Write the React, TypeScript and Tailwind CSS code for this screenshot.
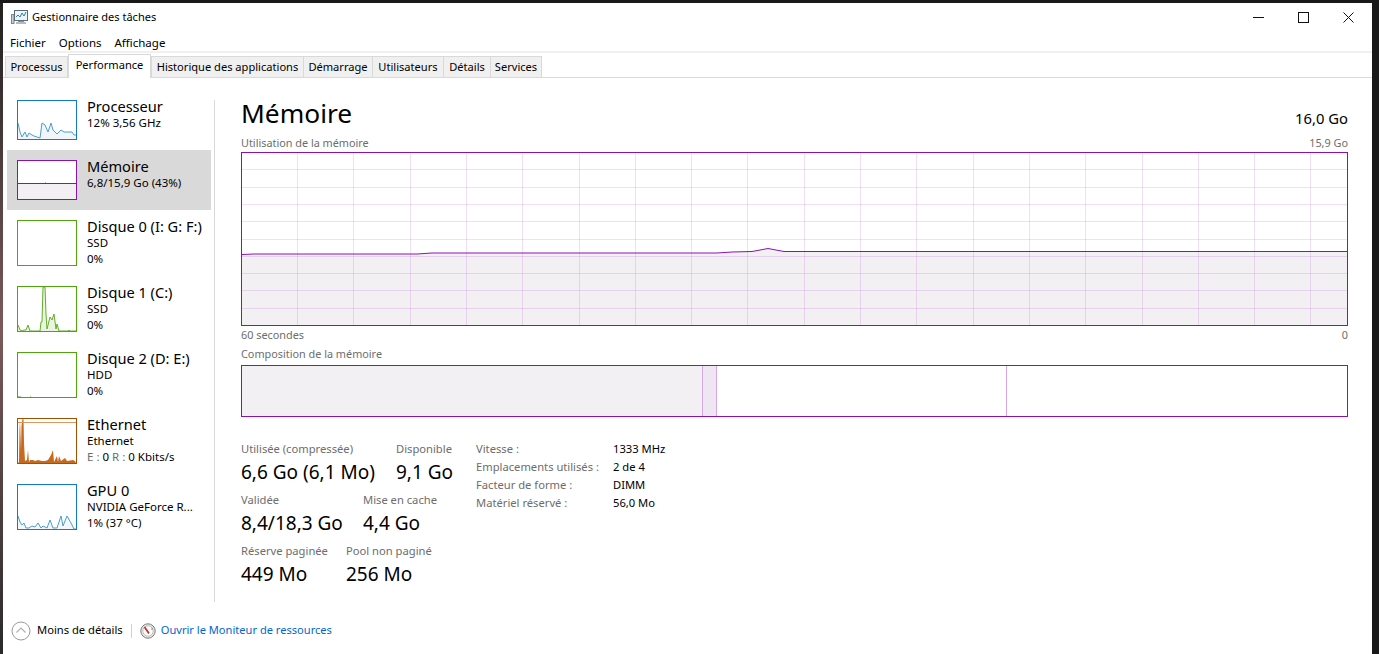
const FONT = "font-['Noto_Sans','Open_Sans',sans-serif]";

const tabs = ['Processus', 'Performance', 'Historique des applications', 'Démarrage', 'Utilisateurs', 'Détails', 'Services'];
const tabWidths = ['w-[63px]', 'w-[83px]', 'w-[153px]', 'w-[70px]', 'w-[72px]', 'w-[48px]', 'w-[52px]'];

const PURPLE = '#8b12ae';

// Sparklines, in 58 wide thumbnail coordinates
const cpuLine = '0,22 2,31 4,36 7,31 9,36 11,32 14,34 16,35 19,36 22,37 24,22 27,24 30,31 33,22 35,29 39,33 41,31 43,29 46,31 49,31 54,31 56,34 58,34';
const diskLine = '0,38 2,43 4,44 6,43 8,43 10,38 12,44 22,44 23,35 24,35 25,0 27,0 28,27 29,42 32,30 34,33 36,27 38,42 39,37 41,44 50,44 51,43 51.5,44 58,44';
const etherLine = '1,43 1.5,11 2,0 3,31 3.5,7 4.5,0 5.5,0 6,24 7,42 9,41 10,31 11,43 12,41 15,41 17,42 20,41 24,42 27,42 30,41 33,36 35,31 36,43 37,41 39,37 40,43 41,37 43,42 47,39 49,42 55,41 57,42';
const gpuLine = '0,31 2,37 4,40 6,38 8,43 11,43 14,41 17,42 20,38 23,43 25,41 29,43 32,35 35,43 39,43 40,40 43,31 45,41 49,31 53,38 56,44 58,44';

function Sparkline({ points, color, fill, height = 44 }: { points: string; color: string; fill: string; height?: number }) {
  return (
    <svg className="h-full w-full" viewBox={`0 0 58 ${height}`} preserveAspectRatio="none">
      <polygon points={`0,${height} ${points} 58,${height}`} fill={fill} />
      <polyline points={points} fill="none" stroke={color} strokeWidth="1" />
    </svg>
  );
}

function SideItem({ title, lines, children, color, selected, short }: {
  title: string;
  lines: React.ReactNode[];
  children?: React.ReactNode;
  color: string;
  selected?: boolean;
  short?: boolean;
}) {
  return (
    <div className={`flex w-[204px] pl-[10px] pt-[10px] ${short ? 'h-[60px]' : 'h-[66px]'} ${selected ? 'bg-[#d9d9d9]' : ''}`}>
      <div className={`w-[60px] shrink-0 border bg-white overflow-hidden ${short ? 'h-[40px]' : 'h-[46px]'}`} style={{ borderColor: color }}>
        {children}
      </div>
      <div className="ml-[10px] min-w-0">
        <div className="text-[14.6px] leading-[18px] text-black -mt-[3px] whitespace-nowrap">{title}</div>
        {lines.map((line, i) => (
          <div key={i} className="text-[11.5px] leading-[16px] text-black whitespace-nowrap">{line}</div>
        ))}
      </div>
    </div>
  );
}

function Stat({ label, value, width }: { label: string; value: string; width: string }) {
  return (
    <div className={width}>
      <div className="text-[11.2px] leading-[16px] text-[#6d6d6d] whitespace-nowrap">{label}</div>
      <div className="text-[19px] leading-[26px] mt-[2px] text-black whitespace-nowrap">{value}</div>
    </div>
  );
}

function MemoryChart() {
  const xs = Array.from({ length: 19 }, (_, i) => 56 + i * 56.3);
  const ys = Array.from({ length: 9 }, (_, i) => 17.3 * (i + 1));
  const line = '0,101.5 12,101 175,101 190,100 475,100 490,99 510,98.5 526,95.5 542,98.5 1107,98.5';
  return (
    <svg className="mt-[2px] block h-[174px] w-[1107px] border border-[#8b12ae] box-border" viewBox="0 0 1105 172" preserveAspectRatio="none">
      <polygon points={`${line} 1107,172 0,172`} fill="#f3f0f4" />
      {xs.map((x) => (
        <line key={x} x1={Math.round(x) - 0.5} x2={Math.round(x) - 0.5} y1="0" y2="172" stroke="#a83fc8" strokeOpacity="0.17" />
      ))}
      {ys.map((y) => (
        <line key={y} x1="0" x2="1105" y1={Math.round(y) - 0.5} y2={Math.round(y) - 0.5} stroke="#a83fc8" strokeOpacity="0.17" />
      ))}
      <polyline points={line} fill="none" stroke={PURPLE} strokeWidth="1" />
    </svg>
  );
}

function AppIcon() {
  return (
    <svg width="17" height="16" viewBox="0 0 17 16">
      <rect x="0.5" y="5.5" width="2.5" height="9" fill="#c8ced2" stroke="#7d868c" />
      <rect x="3.5" y="1.5" width="13" height="10" fill="#eef5fa" stroke="#5f6b73" />
      <polyline points="5,8 7,6 9,8 11,4 13,7 15,3" fill="none" stroke="#2b7fb8" strokeWidth="1" />
      <rect x="7" y="12" width="6" height="1" fill="#8b949a" />
      <rect x="5" y="13" width="10" height="2" fill="#b5bcc1" />
    </svg>
  );
}

function FooterChevron() {
  return (
    <svg width="20" height="20" viewBox="0 0 20 20">
      <circle cx="10" cy="10" r="9" fill="white" stroke="#9a9a9a" />
      <polyline points="5.5,11.5 10,7 14.5,11.5" fill="none" stroke="#b0b0b0" strokeWidth="1.2" />
    </svg>
  );
}

function MonitorIcon() {
  return (
    <svg width="16" height="16" viewBox="0 0 16 16">
      <circle cx="8" cy="8" r="7.2" fill="#e9e9e9" stroke="#7b7b7b" />
      <circle cx="8" cy="8" r="5.2" fill="white" stroke="#9a9a9a" strokeWidth="0.6" />
      <line x1="4.5" y1="4" x2="9" y2="10.5" stroke="#c9302c" strokeWidth="1.8" />
      <line x1="12" y1="4.5" x2="12" y2="7" stroke="#888" strokeWidth="1" />
    </svg>
  );
}

export default function App() {
  return (
    <div className={`${FONT} flex h-[654px] w-[1379px] flex-col overflow-hidden bg-[#191919]`}>
      <div className="h-[3px] shrink-0" />
      <div className="flex min-h-0 flex-1">
        <div className="w-[3px] shrink-0 bg-gradient-to-b from-[#222222] via-[#7d5a5a] to-[#2a2a2a]" />
        <div className="flex w-[1369px] flex-col bg-white">
          {/* Title bar */}
          <div className="flex h-[28px] shrink-0 items-center pl-[8px]">
            <AppIcon />
            <span className="ml-[4px] text-[11.05px] text-black">Gestionnaire des tâches</span>
            <div className="ml-auto flex items-center">
              <svg className="mr-[34px]" width="11" height="11" viewBox="0 0 11 11"><line x1="0" x2="11" y1="5.5" y2="5.5" stroke="#111" /></svg>
              <svg className="mr-[34px]" width="11" height="11" viewBox="0 0 11 11"><rect x="0.5" y="0.5" width="10" height="10" fill="none" stroke="#111" /></svg>
              <svg className="mr-[18px]" width="11" height="11" viewBox="0 0 11 11"><path d="M0.5 0.5 L10.5 10.5 M10.5 0.5 L0.5 10.5" stroke="#111" /></svg>
            </div>
          </div>
          {/* Menu */}
          <div className="flex h-[20px] shrink-0 items-center gap-[13px] pl-[7px] pt-[3px] text-[11.5px] text-black">
            <span>Fichier</span>
            <span>Options</span>
            <span>Affichage</span>
          </div>
          <div className="h-[2px] shrink-0 bg-[#f0f0f0]" />
          {/* Tabs */}
          <div className="relative flex h-[25px] shrink-0 items-end border-b border-[#d9d9d9] pl-[2px]">
            {tabs.map((tab, i) => (
              <div
                key={tab}
                className={`flex items-center justify-center whitespace-nowrap border border-[#d9d9d9] text-[11.1px] text-black ${tabWidths[i]} ${
                  tab === 'Performance'
                    ? 'relative z-10 -mb-[1px] h-[24px] border-b-0 bg-white pb-[3px]'
                    : `h-[21px] border-b-0 bg-[#f0f0f0] pt-[1px] ${i > 2 ? '-ml-[1px]' : ''}`
                }`}
              >
                {tab}
              </div>
            ))}
          </div>
          {/* Body */}
          <div className="flex min-h-0 flex-1">
            <div className="w-[211px] shrink-0 pl-[4px] pt-[12px]">
              <SideItem short title="Processeur" lines={['12%  3,56 GHz']} color="#117dbb">
                <Sparkline points={cpuLine} color="#4a9fd0" fill="#f1f6fa" height={38} />
              </SideItem>
              <SideItem short selected title="Mémoire" lines={['6,8/15,9 Go (43%)']} color={PURPLE}>
                <svg className="h-full w-full" viewBox="0 0 58 38" preserveAspectRatio="none">
                  <rect x="0" y="22" width="58" height="16" fill="#f3f0f4" />
                  <line x1="0" x2="58" y1="22.5" y2="22.5" stroke={PURPLE} />
                  <rect x="27" y="21" width="1" height="1" fill="#c79ad8" />
                </svg>
              </SideItem>
              <SideItem title="Disque 0 (I: G: F:)" lines={['SSD', '0%']} color="#4da60c" />
              <SideItem title="Disque 1 (C:)" lines={['SSD', '0%']} color="#4da60c">
                <Sparkline points={diskLine} color="#63ad2c" fill="#eaf4e0" />
              </SideItem>
              <SideItem title="Disque 2 (D: E:)" lines={['HDD', '0%']} color="#4da60c">
                <svg className="h-full w-full" viewBox="0 0 58 44" preserveAspectRatio="none">
                  <line x1="0" x2="3" y1="43.5" y2="43.5" stroke="#a8d18a" />
                  <rect x="12" y="43" width="1" height="1" fill="#a8d18a" />
                </svg>
              </SideItem>
              <SideItem
                title="Ethernet"
                lines={['Ethernet', <span key="r"><span className="text-[#6d6d6d]">E :</span> 0 <span className="text-[#6d6d6d]">R :</span> 0 Kbits/s</span>]}
                color="#a74f01"
              >
                <svg className="h-full w-full" viewBox="0 0 58 44" preserveAspectRatio="none">
                  <polygon points={`0,44 ${etherLine} 58,44`} fill="#c66a1e" />
                  <line x1="0" x2="58" y1="3.5" y2="3.5" stroke="#d39a68" />
                </svg>
              </SideItem>
              <SideItem title="GPU 0" lines={['NVIDIA GeForce R...', '1%  (37 °C)']} color="#117dbb">
                <Sparkline points={gpuLine} color="#4a9fd0" fill="#f4f8fb" />
              </SideItem>
            </div>
            <div className="mt-[22px] h-[502px] w-px shrink-0 bg-[#d9d9d9]" />
            {/* Main panel */}
            <div className="w-[1107px] shrink-0 ml-[26px] mt-[19px]">
              <div className="flex h-[32px] items-end justify-between">
                <span className="text-[26.3px] leading-[32px] text-black">Mémoire</span>
                <span className="mb-[1px] text-[14.8px] leading-[20px] text-black">16,0 Go</span>
              </div>
              <div className="mt-[7px] flex justify-between text-[10.85px] leading-[14px] text-[#6d6d6d]">
                <span>Utilisation de la mémoire</span>
                <span>15,9 Go</span>
              </div>
              <MemoryChart />
              <div className="mt-[2px] flex justify-between text-[10.85px] leading-[14px] text-[#6d6d6d]">
                <span>60 secondes</span>
                <span>0</span>
              </div>
              <div className="mt-[5px] text-[10.85px] leading-[14px] text-[#6d6d6d]">Composition de la mémoire</div>
              <div className="mt-[4px] flex h-[52px] border border-[#8b12ae] bg-white">
                <div className="w-[460px] bg-[#f3f0f4]" />
                <div className="w-[15px] border-x border-[#d3a8e3] bg-[#eee6f2]" />
                <div className="w-[290px] border-r border-[#d3a8e3]" />
              </div>
              <div className="mt-[24px] flex">
                <div className="w-[235px] shrink-0">
                  <div className="flex">
                    <Stat label="Utilisée (compressée)" value="6,6 Go (6,1 Mo)" width="w-[155px]" />
                    <Stat label="Disponible" value="9,1 Go" width="w-[80px]" />
                  </div>
                  <div className="mt-[7px] flex">
                    <Stat label="Validée" value="8,4/18,3 Go" width="w-[122px]" />
                    <Stat label="Mise en cache" value="4,4 Go" width="w-[100px]" />
                  </div>
                  <div className="mt-[7px] flex">
                    <Stat label="Réserve paginée" value="449 Mo" width="w-[105px]" />
                    <Stat label="Pool non paginé" value="256 Mo" width="w-[100px]" />
                  </div>
                </div>
                <div className="-mt-[1px] text-[11.2px] leading-[18px]">
                  {[
                    ['Vitesse :', '1333 MHz'],
                    ['Emplacements utilisés :', '2 de 4'],
                    ['Facteur de forme :', 'DIMM'],
                    ['Matériel réservé :', '56,0 Mo'],
                  ].map(([label, value]) => (
                    <div key={label} className="flex whitespace-nowrap">
                      <span className="w-[137px] text-[#6d6d6d]">{label}</span>
                      <span className="text-black">{value}</span>
                    </div>
                  ))}
                </div>
              </div>
            </div>
          </div>
          {/* Footer */}
          <div className="flex h-[49px] shrink-0 items-center pt-[2px] pl-[8px] text-[11.2px]">
            <FooterChevron />
            <span className="ml-[6px] text-black">Moins de détails</span>
            <div className="mx-[8px] h-[14px] w-px bg-[#d0d0d0]" />
            <MonitorIcon />
            <span className="ml-[5px] text-[11.1px] text-[#0066cc]">Ouvrir le Moniteur de ressources</span>
          </div>
        </div>
        <div className="w-[7px] shrink-0" />
      </div>
    </div>
  );
}
